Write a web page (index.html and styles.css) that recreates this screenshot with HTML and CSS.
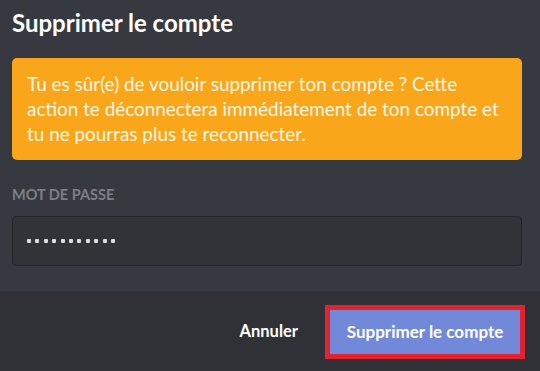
FILE: index.html
```html
<!DOCTYPE html>
<html lang="fr">
<head>
<meta charset="utf-8">
<title>Supprimer le compte</title>
<link rel="stylesheet" href="styles.css">
</head>
<body>
<div class="modal">
  <div class="content">
    <h2 class="title">Supprimer le compte</h2>
    <div class="warning">Tu es sûr(e) de vouloir supprimer ton compte ? Cette action te déconnectera immédiatement de ton compte et tu ne pourras plus te reconnecter.</div>
    <div class="field">
      <label class="label" for="pw">Mot de passe</label>
      <div class="input" id="pw">
        <span class="dots"><i></i><i></i><i></i><i></i><i></i><i></i><i></i><i></i><i></i><i></i><i></i></span>
      </div>
    </div>
  </div>
  <div class="footer">
    <button class="btn-cancel" type="button">Annuler</button>
    <div class="highlight">
      <button class="btn-danger" type="button">Supprimer le compte</button>
    </div>
  </div>
</div>
</body>
</html>
```
FILE: styles.css
```css
html, body {
  margin: 0;
  padding: 0;
  background: #36393f;
}
body {
  width: 540px;
  height: 371px;
  overflow: hidden;
  font-family: Lato, "Open Sans", sans-serif;
}
.modal {
  display: flex;
  flex-direction: column;
  height: 371px;
}
.content {
  flex: 1;
  padding: 0 18px 0 12px;
  display: flex;
  flex-direction: column;
}
.title {
  margin: 6px 0 0;
  font-size: 24px;
  line-height: 34px;
  font-weight: 700;
  color: #ffffff;
}
.warning {
  margin-top: 18px;
  height: 102px;
  box-sizing: border-box;
  padding: 13px 15px;
  background: #faa61a;
  border-radius: 5px;
  color: #fff6e6;
  font-size: 18.9px;
  line-height: 25px;
}
.field {
  margin-top: 26px;
  display: flex;
  flex-direction: column;
}
.label {
  font-size: 14.5px;
  line-height: 18px;
  font-weight: 700;
  text-transform: uppercase;
  color: #7c7f85;
}
.input {
  margin-top: 12px;
  height: 50px;
  box-sizing: border-box;
  border: 1px solid #222428;
  border-radius: 4px;
  background: #303338;
  display: flex;
  align-items: center;
  padding-left: 14px;
}
.dots {
  display: flex;
  gap: 4.4px;
}
.dots i {
  width: 4px;
  height: 4px;
  border-radius: 1px;
  background: #dcddde;
}
.footer {
  height: 80px;
  background: #2f3136;
  display: flex;
  align-items: center;
  justify-content: flex-end;
  padding-right: 15px;
}
.btn-cancel {
  background: none;
  border: 0;
  color: #ffffff;
  font-family: Lato, "Open Sans", sans-serif;
  font-size: 16.5px;
  font-weight: 700;
  margin-right: 27px;
  padding: 0;
}
.highlight {
  border: 5px solid #e0232f;
  display: flex;
  margin-top: 1px;
}
.btn-danger {
  width: 190px;
  height: 44px;
  background: #7289da;
  border: 0;
  color: #ffffff;
  font-family: Lato, "Open Sans", sans-serif;
  font-size: 17px;
  font-weight: 700;
  padding: 0;
}
```
